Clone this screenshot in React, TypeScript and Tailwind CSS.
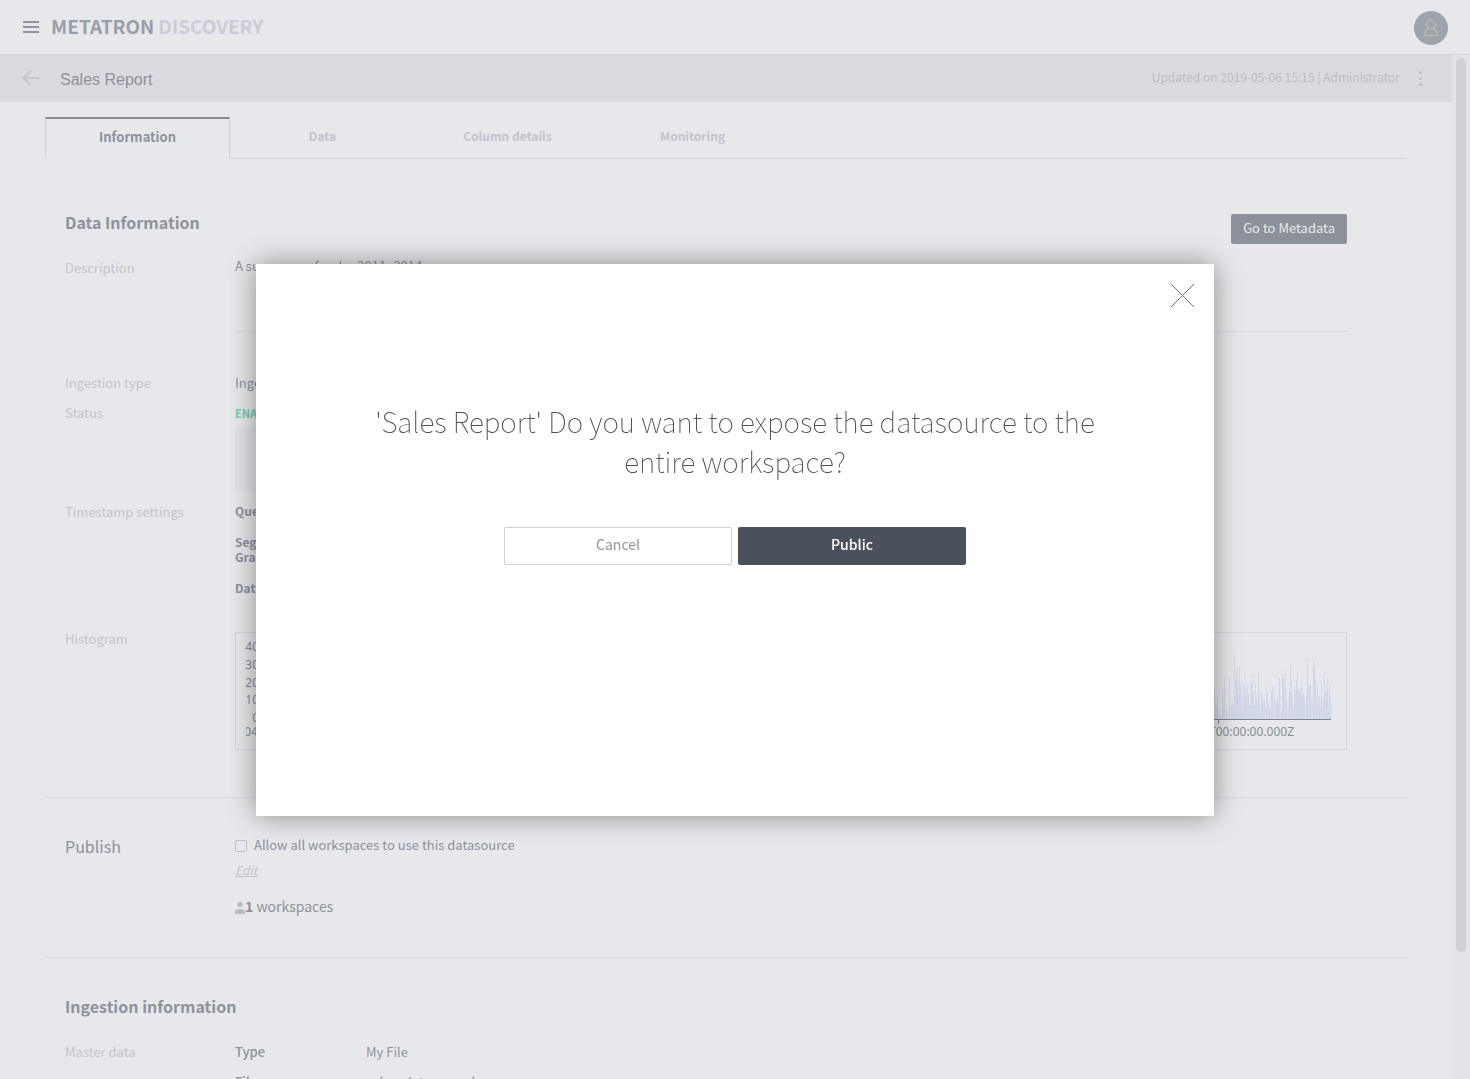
import React from "react";

const barSource =
  "43:207 47:275 50:263 53:228 57:280 60:285 66:205 71:260 74:174 80:268 85:270 89:194 94:255 97:238 100:260 103:104 106:228 109:146 113:174 115:222 118:142 121:200 124:180 127:258 131:200 134:158 137:228 140:205 142:188 145:222 148:255 152:180 155:190 157:163 160:228 163:258 167:185 170:262 173:235 176:158 179:250 183:216 186:235 189:238 194:238 198:200 202:216 205:255 208:265 211:275 215:210 218:200 222:200 229:243 232:233 235:255 239:174 243:280 245:275 248:163 251:174 254:205 257:153 260:243 265:233 268:216 272:137 275:180 278:243 284:200 287:210 290:185 292:158 295:205 298:216 302:205 304:163 307:205 310:225 313:230 319:216 322:114 325:188 328:200 331:195 337:248 340:137 343:120 346:180 349:265 352:200 355:270 359:228 363:190 367:270 370:238 373:153 376:216 379:210 381:174 384:275 388:195 391:233";

const bars = barSource.split(" ").map((pair) => {
  const [x, top] = pair.split(":").map(Number);
  return { x: Math.floor(x / 3) + 964, height: Math.round((298 - top) / 3) };
});

const cycles = [0, 1, 2, 3, 4, 5, 6, 7];

function Histogram() {
  return (
    <div className="border border-[#d4d6db]">
      <svg viewBox="0 0 1110 116" className="block h-auto w-full" role="img" aria-label="Histogram">
        {cycles.map((cycle) => (
          <g key={cycle} transform={`translate(${cycle * -118} 0)`}>
            {bars.map((bar, i) => (
              <g key={i} fill="#d0d6e7">
                <rect x={bar.x} y={86 - bar.height} width="1" height={bar.height} opacity={i % 3 === 1 ? 0.6 : 0.95} />
                <rect x={bar.x + 1} y={86 - bar.height * 0.6} width="1" height={bar.height * 0.6} opacity="0.5" />
              </g>
            ))}
          </g>
        ))}
        <path d="M27 86.5H1095M982.5 87V91" stroke="#80848e" fill="none" />
        <g fill="#8a8d95" fontSize="12" fontFamily="'Noto Sans', sans-serif" textAnchor="end">
          <text x="23" y="18">40</text>
          <text x="23" y="36">30</text>
          <text x="23" y="54">20</text>
          <text x="23" y="71">10</text>
          <text x="23" y="89">0</text>
        </g>
        <svg x="10" y="90" width="1090" height="20">
          <g fill="#8a8d95" fontSize="12" fontFamily="'Noto Sans', sans-serif" textAnchor="end">
            <text x="97" y="13">2011-01-04T00:00:00.000Z</text>
            <text x="1048" y="13">2014-10-10T00:00:00.000Z</text>
          </g>
        </svg>
      </svg>
    </div>
  );
}

function Label({ children }: { children: React.ReactNode }) {
  return <div className="w-[170px] shrink-0 text-[13px] leading-5 text-[#c2c4cb]">{children}</div>;
}

function Header() {
  return (
    <header className="flex h-[55px] shrink-0 items-center border-b border-[#d1d3d8] pr-[22px] pl-[23px]">
      <button aria-label="Menu" className="flex w-4 flex-col gap-[3px]">
        <span className="h-[2px] bg-[#9095a0]" />
        <span className="h-[2px] bg-[#9095a0]" />
        <span className="h-[2px] bg-[#9095a0]" />
      </button>
      <a href="#" className="ml-3 flex gap-1 pb-[2px] text-[19px] leading-6 font-bold">
        <span className="text-[#9aa0a8]">METATRON</span>
        <span className="text-[#cbccd6]">DISCOVERY</span>
      </a>
      <button aria-label="Account" className="mt-[2px] ml-auto flex size-[34px] items-center justify-center rounded-full bg-[#9fa4ab]">
        <svg width="14" height="18" viewBox="0 0 14 18" fill="none" stroke="#b9bdc2" strokeWidth="1.2">
          <circle cx="7" cy="5.5" r="4.4" />
          <path d="M4.5 9.5C2 10.5 .6 12.5 .6 16.5H13.4C13.4 12.5 12 10.5 9.5 9.5" />
        </svg>
      </button>
    </header>
  );
}

function Toolbar() {
  return (
    <div className="flex h-[47px] items-center bg-[#dadbe0] pr-[30px] pb-px pl-[22px]">
      <button aria-label="Back">
        <svg width="17" height="16" viewBox="0 0 17 16" fill="none" stroke="#c6c7cd" strokeWidth="2">
          <path d="M8.5 .7L1.4 8L8.5 15.3M1.4 8H17" />
        </svg>
      </button>
      <h1 className="ml-[21px] pt-[3px] font-['Liberation_Sans',sans-serif] text-base leading-5 text-[#8f929b]">Sales Report</h1>
      <span className="ml-auto pb-[2px] text-xs leading-5 text-[#b9bbc4]">Updated on 2019-05-06 15:15 | Administrator</span>
      <button aria-label="More" className="ml-[19px] flex flex-col gap-[3px]">
        <span className="size-[3px] rounded-full bg-[#bcbec6]" />
        <span className="size-[3px] rounded-full bg-[#bcbec6]" />
        <span className="size-[3px] rounded-full bg-[#bcbec6]" />
      </button>
    </div>
  );
}

function Tabs() {
  return (
    <nav className="flex h-[42px] text-xs font-bold">
      <button className="w-[185px] border-x border-t-2 border-x-[#d1d3d8] border-t-[#8a8b90] pb-1 text-[13px] text-[#8f929b]">Information</button>
      <button className="w-[185px] border-b border-[#d1d3d8] pb-1 text-[#c2c4cc]">Data</button>
      <button className="w-[185px] border-b border-[#d1d3d8] pb-1 text-[#c2c4cc]">Column details</button>
      <button className="w-[185px] border-b border-[#d1d3d8] pb-1 text-[#c2c4cc]">Monitoring</button>
      <div className="flex-1 border-b border-[#d1d3d8]" />
    </nav>
  );
}

function DataInformation() {
  return (
    <section className="border-b border-dotted border-[#c9cbd0] pt-[55px] pr-[60px] pb-[47px] pl-5">
      <div className="flex h-[30px] justify-between">
        <h2 className="text-base leading-4 font-bold text-[#8f929b]">Data Information</h2>
        <button className="rounded-xs bg-[#8d929a] px-3 pb-[2px] text-[13px] text-[#e6e8eb]">Go to Metadata</button>
      </div>
      <div className="flex pt-[14px]">
        <Label>Description</Label>
        <div className="h-[74px] flex-1 border-b border-dotted border-[#c9cbd0] text-[13px] leading-4 text-[#8f929b]">
          A summary of order 2011~2014
        </div>
      </div>
      <div className="flex pt-[41px]">
        <Label>Ingestion type</Label>
        <div className="text-[13px] leading-5 text-[#8f929b]">Ingested data</div>
      </div>
      <div className="flex pt-[10px]">
        <Label>Status</Label>
        <div>
          <div className="text-[11px] leading-5 font-bold text-[#70c9ae]">ENABLED</div>
          <div className="mt-1 h-[63px] w-[640px] bg-[#e1e2e6]" />
        </div>
      </div>
      <div className="flex pt-3">
        <Label>Timestamp settings</Label>
        <div className="flex w-[131px] flex-col gap-4 text-xs leading-[15px] font-bold text-[#8f929b]">
          <div className="pt-px">Query Granularity</div>
          <div>Segment<br />Granularity</div>
          <div>Data range</div>
        </div>
      </div>
      <div className="flex pt-[34px]">
        <Label>Histogram</Label>
        <div className="flex-1 pt-[3px]">
          <Histogram />
        </div>
      </div>
    </section>
  );
}

function Publish() {
  return (
    <section className="flex border-b border-dotted border-[#c9cbd0] pt-[38px] pb-[41px] pl-5">
      <h2 className="w-[170px] text-base leading-5 text-[#8f929b]">Publish</h2>
      <div className="text-[#8f929b]">
        <label className="flex items-center text-[13px] leading-[17px]">
          <input type="checkbox" className="mt-[3px] mr-[7px] size-3 appearance-none rounded-xs border border-[#bcbec6]" />
          Allow all workspaces to use this datasource
        </label>
        <a href="#" className="mt-[7px] block text-xs leading-5 text-[#c2c4cc] italic underline">Edit</a>
        <div className="mt-4 flex items-center text-sm leading-5">
          <svg width="10" height="12" viewBox="0 0 10 12" className="mt-1" fill="#b9bcc1">
            <circle cx="5" cy="2.5" r="2.7" />
            <path d="M0 12V9.5Q0 7 5 7T10 9.5V12Z" />
          </svg>
          <span><b>1</b> workspaces</span>
        </div>
      </div>
    </section>
  );
}

function IngestionInformation() {
  return (
    <section className="pt-[38px] pl-5">
      <h2 className="text-base leading-5 font-bold text-[#8f929b]">Ingestion information</h2>
      <div className="flex pt-[26px]">
        <Label>Master data</Label>
        <dl className="grid grid-cols-[131px_1fr] gap-y-[11px] text-[13px] leading-[19px] text-[#8f929b]">
          <dt className="font-medium">Type</dt>
          <dd>My File</dd>
          <dt className="font-medium">File</dt>
          <dd>sales_data_sample.csv</dd>
        </dl>
      </div>
    </section>
  );
}

function ConfirmDialog() {
  return (
    <div className="fixed inset-0 flex items-center justify-center pt-px">
      <div role="dialog" aria-modal="true" aria-labelledby="dialog-title" className="relative h-[552px] w-[958px] bg-white px-[100px] pt-[137px] text-center shadow-[0_0_26px_rgba(0,0,0,0.4)]">
        <button aria-label="Close" className="absolute top-[19px] right-[19px]">
          <svg width="25" height="25" viewBox="0 0 25 25" stroke="#6d727b" fill="none">
            <path d="M1 1L24 24M24 1L1 24" />
          </svg>
        </button>
        <h2 id="dialog-title" className="text-[28px] leading-10 font-thin text-[#4b515b]">
          'Sales Report' Do you want to expose the datasource to the entire workspace?
        </h2>
        <div className="mt-[46px] flex justify-center gap-[6px] text-sm">
          <button className="h-[38px] w-[228px] rounded-xs border border-[#cdd0d4] pb-1 text-[#90969f]">Cancel</button>
          <button className="h-[38px] w-[228px] rounded-xs bg-[#4b515b] pb-1 font-medium text-white">Public</button>
        </div>
      </div>
    </div>
  );
}

export default function App() {
  return (
    <div className="flex h-screen flex-col overflow-hidden bg-[#e6e8eb] font-['Noto_Sans_CJK_KR',sans-serif]">
      <Header />
      <div className="flex min-h-0 flex-1">
        <main className="min-w-0 flex-1 overflow-hidden">
          <Toolbar />
          <div className="px-[45px] pt-[15px]">
            <Tabs />
            <DataInformation />
            <Publish />
            <IngestionInformation />
          </div>
        </main>
        <div className="w-[18px] bg-[#e2e3e7] px-1 pt-[3px]">
          <div className="h-[894px] rounded-full bg-[#cfd0d9]" />
        </div>
      </div>
      <ConfirmDialog />
    </div>
  );
}
